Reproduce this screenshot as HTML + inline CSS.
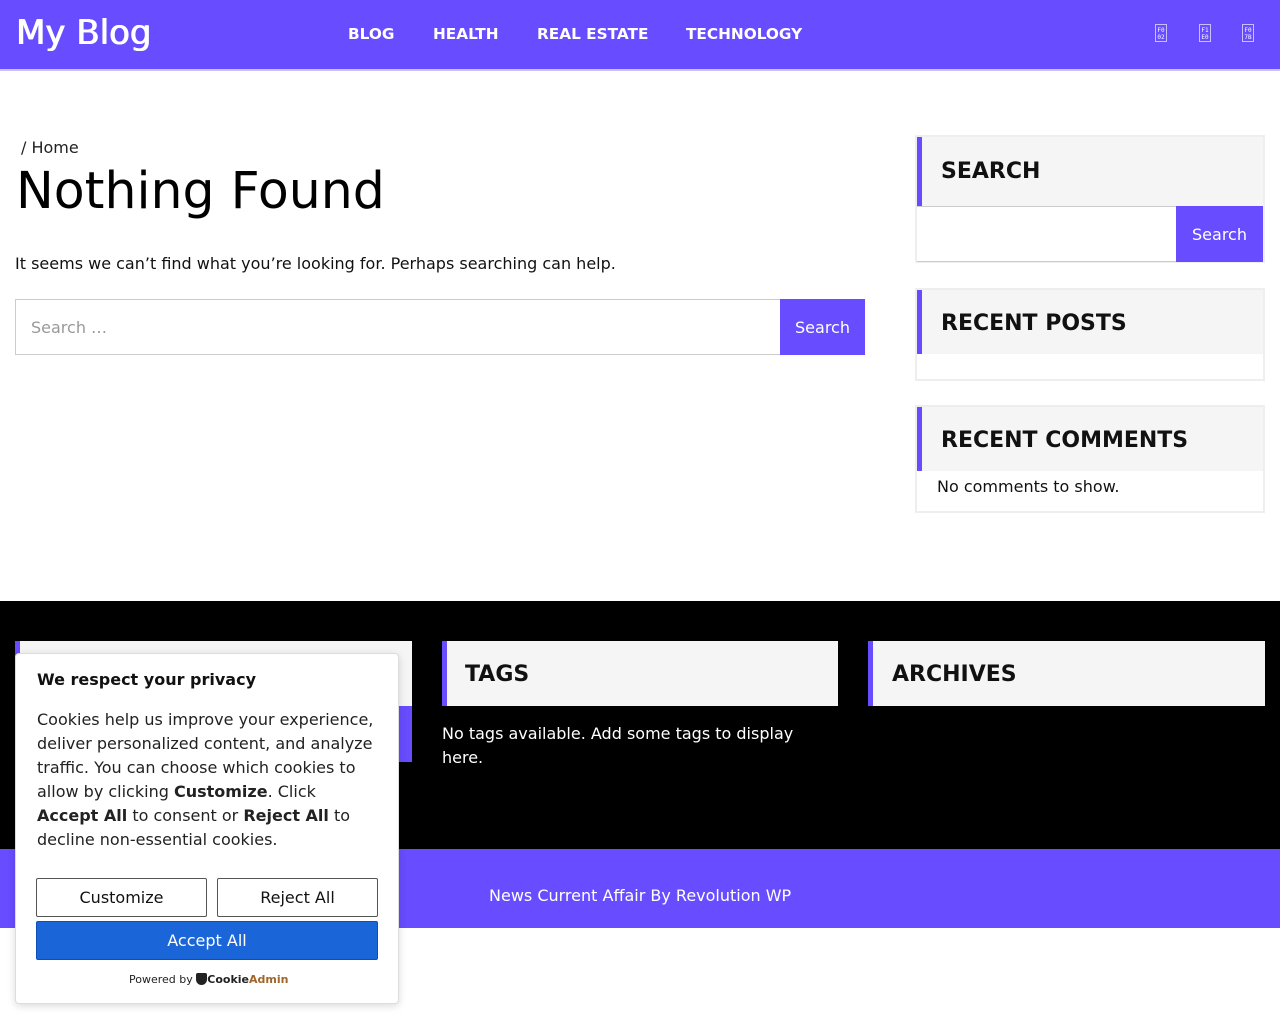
<!DOCTYPE html>
<html><head><meta charset="utf-8"><style>
*{box-sizing:border-box;margin:0;padding:0}
body{width:1280px;height:1024px;position:relative;background:#fff;font-family:"DejaVu Sans","Liberation Sans",sans-serif;color:#111;overflow:hidden}
.a{position:absolute}
.hdr{left:0;top:0;width:1280px;height:71px;background:#684cff;border-bottom:2px solid #c9c2f5}
.logo{left:16px;top:13px;color:#fff;font-size:34px;font-weight:normal;text-shadow:0.6px 0 0 #fff,-0.4px 0 0 #fff}
.nav{top:25px;color:#fff;font-weight:bold;font-size:15.3px}
.ic{top:24px;width:12px;height:18px;border:1px solid #c8bfff;color:#fff;font-size:6px;line-height:7px;text-align:center;padding-top:2px;font-family:"DejaVu Sans Mono",monospace}
.btn{background:#684cff;color:#fff;font-size:16px;text-align:center}
.card{border:2px solid #eee;background:#fff}
.wh{background:#f5f5f5;border-left:5px solid #684cff;font-weight:bold;font-size:22px;letter-spacing:0}
</style></head><body>
<div class="a hdr"></div>
<div class="a logo">My Blog</div>
<div class="a nav" style="left:348px">BLOG</div>
<div class="a nav" style="left:433px">HEALTH</div>
<div class="a nav" style="left:537px">REAL ESTATE</div>
<div class="a nav" style="left:686px">TECHNOLOGY</div>
<div class="a ic" style="left:1155px">F0<br>02</div>
<div class="a ic" style="left:1199px">F1<br>E0</div>
<div class="a ic" style="left:1242px">F0<br>7B</div>

<div class="a" style="left:21px;top:138px;font-size:16px;color:#222">/ Home</div>
<div class="a" style="left:16px;top:161px;font-size:50.5px;color:#000">Nothing Found</div>
<div class="a" style="left:15px;top:254px;font-size:16px">It seems we can’t find what you’re looking for. Perhaps searching can help.</div>
<div class="a" style="left:15px;top:299px;width:766px;height:56px;border:1px solid #ccc;color:#999;font-size:16px;padding:18px 15px">Search …</div>
<div class="a btn" style="left:780px;top:299px;width:85px;height:56px;line-height:57px">Search</div>

<div class="a card" style="left:915px;top:135px;width:350px;height:128px"></div>
<div class="a wh" style="left:917px;top:137px;width:346px;height:69px;padding:22px 0 0 19px">SEARCH</div>
<div class="a" style="left:917px;top:206px;width:259px;height:56px;border-top:1px solid #ccc;border-bottom:1px solid #ccc"></div>
<div class="a btn" style="left:1176px;top:206px;width:87px;height:56px;line-height:57px">Search</div>

<div class="a card" style="left:915px;top:288px;width:350px;height:93px"></div>
<div class="a wh" style="left:917px;top:290px;width:346px;height:64px;padding:21px 0 0 19px">RECENT POSTS</div>

<div class="a card" style="left:915px;top:405px;width:350px;height:108px"></div>
<div class="a wh" style="left:917px;top:407px;width:346px;height:64px;padding:21px 0 0 19px">RECENT COMMENTS</div>
<div class="a" style="left:937px;top:477px;font-size:16px">No comments to show.</div>

<div class="a" style="left:0;top:601px;width:1280px;height:248px;background:#000"></div>
<div class="a wh" style="left:15px;top:641px;width:397px;height:65px"></div>
<div class="a" style="left:300px;top:706px;width:112px;height:56px;background:#684cff"></div>
<div class="a wh" style="left:442px;top:641px;width:396px;height:65px;padding:21px 0 0 18px">TAGS</div>
<div class="a" style="left:442px;top:722px;font-size:16px;color:#fff;line-height:24px;width:380px">No tags available. Add some tags to display here.</div>
<div class="a wh" style="left:868px;top:641px;width:397px;height:65px;padding:21px 0 0 19px">ARCHIVES</div>

<div class="a" style="left:0;top:849px;width:1280px;height:79px;background:#684cff"></div>
<div class="a" style="left:489px;top:886px;color:#fff;font-size:16px">News Current Affair By Revolution WP</div>

<div class="a" style="left:15px;top:653px;width:384px;height:351px;background:#fff;border:1px solid #ddd;border-radius:4px;box-shadow:0 2px 8px rgba(0,0,0,.15)">
<div class="a" style="left:21px;top:16px;font-weight:bold;font-size:16px">We respect your privacy</div>
<div class="a" style="left:21px;top:54px;width:342px;font-size:16px;line-height:24px;color:#222">Cookies help us improve your experience, deliver personalized content, and analyze traffic. You can choose which cookies to allow by clicking <b>Customize</b>. Click <b>Accept All</b> to consent or <b>Reject All</b> to decline non-essential cookies.</div>
<div class="a" style="left:20px;top:224px;width:171px;height:39px;border:1px solid #555;border-radius:2px;text-align:center;line-height:37px;font-size:16px">Customize</div>
<div class="a" style="left:201px;top:224px;width:161px;height:39px;border:1px solid #555;border-radius:2px;text-align:center;line-height:37px;font-size:16px">Reject All</div>
<div class="a" style="left:20px;top:267px;width:342px;height:39px;background:#1a66d9;border:1px solid #0d4fb5;border-radius:2px;text-align:center;line-height:37px;font-size:16px;color:#fff">Accept All</div>
<div class="a" style="left:113px;top:319px;font-size:11px;color:#222">Powered by <span style="display:inline-block;width:11px;height:12px;background:#222;border-radius:2px 2px 6px 6px;vertical-align:-2px"></span><b>Cookie</b><b style="color:#a0652a">Admin</b></div>
</div>
</body></html>
